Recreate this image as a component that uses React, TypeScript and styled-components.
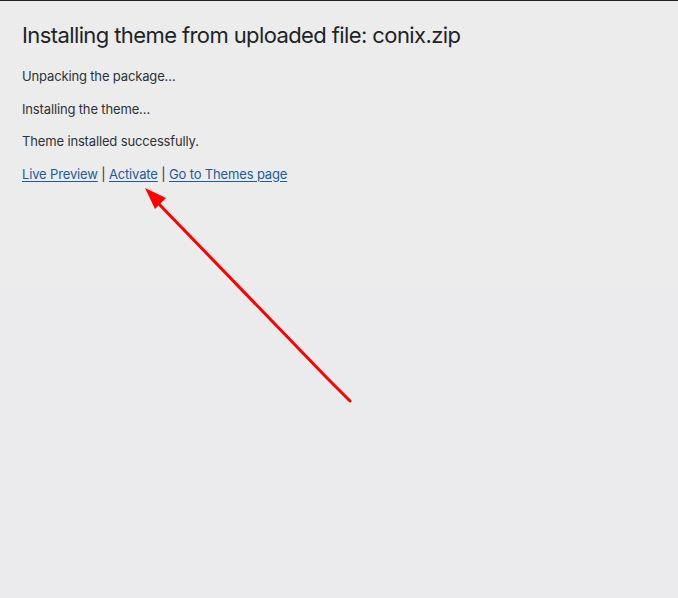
import React from "react";
import styled, { createGlobalStyle } from "styled-components";

const GlobalStyle = createGlobalStyle`
  html, body {
    margin: 0;
    padding: 0;
  }
  body {
    min-height: 598px;
    background: linear-gradient(#ececec 0, #ececec 289px, #ebebed 289px);
    font-family: Inter, "Noto Sans", "Liberation Sans", sans-serif;
    color: #2c3338;
  }
`

const Page = styled.div`
  position: relative;
  min-height: 598px;
  border-top: 1px solid #1d2327;
  box-sizing: border-box;
`
const Wrap = styled.div`
  padding: 0 20px 0 22px;
`
const Title = styled.h1`
  margin: 0;
  padding: 20px 0 4px;
  font-size: 22px;
  font-weight: 400;
  line-height: 29px;
  color: #1d2327;
  letter-spacing: -0.6px;
`
const Message = styled.p`
  margin: 13px 0;
  font-size: 13px;
  line-height: 19.5px;
  letter-spacing: -0.15px;
`
const Actions = styled(Message)``
const Link = styled.a`
  color: #1f5a9a;
  text-decoration: underline;
  text-underline-offset: 2px;
`
const Arrow = styled.svg`
  position: absolute;
  left: 0;
  top: 0;
  pointer-events: none;
`

const links = ["Live Preview", "Activate", "Go to Themes page"];

const App: React.FC = () => {
  return (
    <>
      <GlobalStyle />
      <Page>
        <Wrap>
          <Title>Installing theme from uploaded file: conix.zip</Title>
          <Message>Unpacking the package…</Message>
          <Message>Installing the theme…</Message>
          <Message>Theme installed successfully.</Message>
          <Actions>
            {links.map((label, i) => (
              <React.Fragment key={label}>
                {i > 0 && " | "}
                <Link href="#">{label}</Link>
              </React.Fragment>
            ))}
          </Actions>
        </Wrap>
        <Arrow width="678" height="598" viewBox="0 0 678 598">
          <polyline
            points="350,400 327,377 157,201"
            fill="none"
            stroke="#ff0000"
            strokeWidth="3"
            strokeLinecap="round"
          />
          <polygon points="145,187 166,197 155,208" fill="#ff0000" />
        </Arrow>
      </Page>
    </>
  );
};

export default App;
